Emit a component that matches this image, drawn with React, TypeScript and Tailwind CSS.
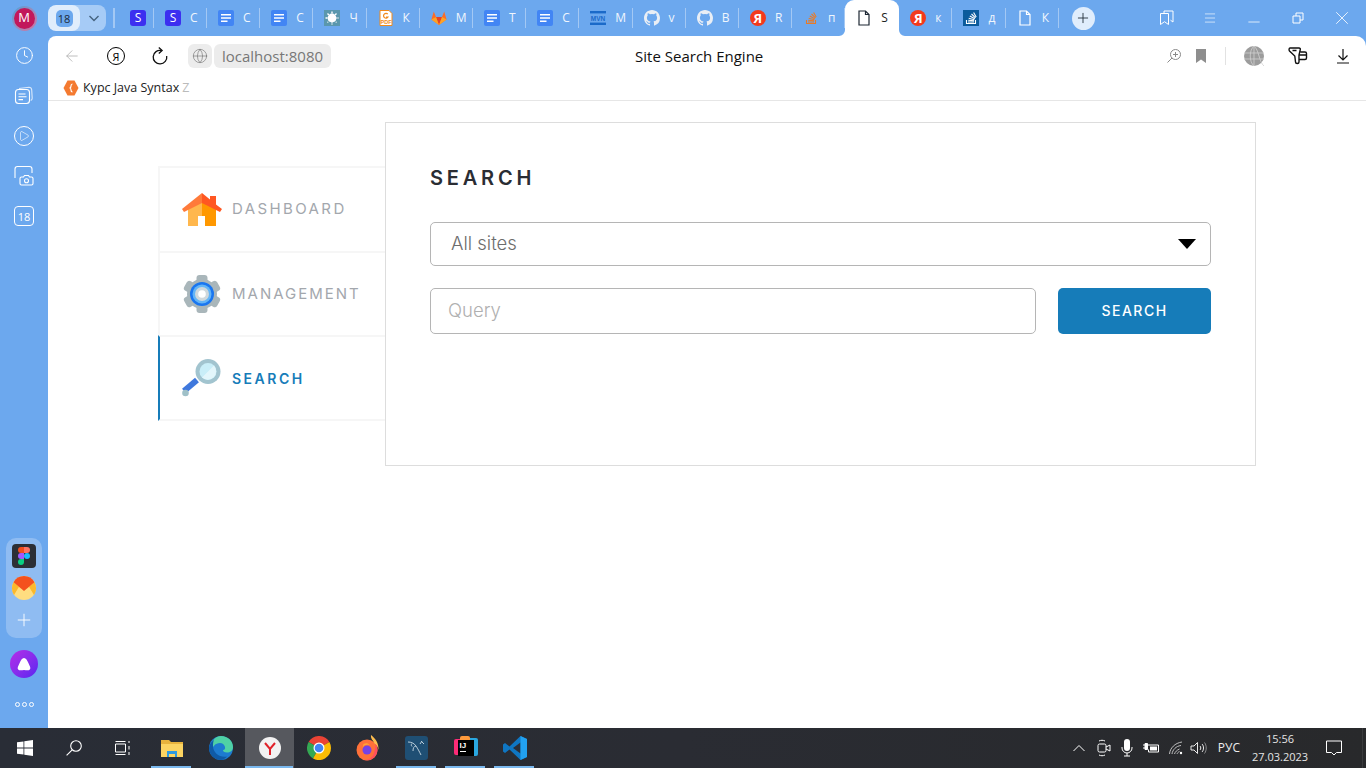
import React from 'react';
import { ArrowLeft, Globe, Download, Plus, X, Minus, Menu, Clock, Play } from 'lucide-react';

const browserFont = { fontFamily: '"Open Sans", "Noto Sans", sans-serif' };

const DocIcon = () => (
  <svg width="16" height="16" viewBox="0 0 16 16">
    <rect width="16" height="16" rx="2" fill="#4285f4" />
    <path d="M3 4h10v1.6H3zM3 7.2h10v1.6H3zM3 10.4h6.5V12H3z" fill="#fff" />
  </svg>
);
const SIcon = () => (
  <div className="flex h-4 w-4 items-center justify-center rounded-[3px] bg-[#3c2ff0] text-[12px] leading-none text-white">S</div>
);
const SplatIcon = () => (
  <svg width="16" height="16" viewBox="0 0 16 16">
    <rect width="16" height="16" fill="#5a97ad" />
    <circle cx="8" cy="8" r="4.4" fill="#fff" />
    <path d="M8 1.5v13M1.5 8h13M3.5 3.5l9 9M12.5 3.5l-9 9" stroke="#fff" strokeWidth="1.4" strokeDasharray="2 1" />
  </svg>
);
const PdfIcon = () => (
  <svg width="16" height="16" viewBox="0 0 16 16">
    <path d="M2 .5h9l3 3v12H2z" fill="#fff" stroke="#f08a1d" />
    <path d="M9.800 4.200A2.400 2.400 0 1 0 10 7H8" fill="none" stroke="#f08a1d" strokeWidth="1.200" />
    <text x="8" y="14" textAnchor="middle" fontSize="5.500" fontWeight="700" fill="#f08a1d" fontFamily="Liberation Sans, sans-serif">PDF</text>
  </svg>
);
const GitlabIcon = () => (
  <svg width="16" height="16" viewBox="0 0 16 16">
    <path d="M8 15L.4 9.4 2.8 1.5 5 7h6l2.2-5.5 2.4 7.9z" fill="#fc6d26" />
    <path d="M8 15L5 7h6z" fill="#e24329" />
    <path d="M8 15L.4 9.4 5 7zM8 15l7.6-5.6L11 7z" fill="#fca326" />
  </svg>
);
const MvnIcon = () => (
  <svg width="16" height="16" viewBox="0 0 16 16">
    <rect y="1" width="16" height="2.4" fill="#1b6ac9" />
    <rect y="12.6" width="16" height="2.4" fill="#1b6ac9" />
    <text x="8" y="10.6" textAnchor="middle" fontSize="6.5" fontWeight="700" fill="#1b6ac9" fontFamily="Liberation Sans, sans-serif">MVN</text>
  </svg>
);
const GithubIcon = () => (
  <svg width="16" height="16" viewBox="0 0 16 16">
    <path
      fill="#e9eef5"
      d="M8 0C3.58 0 0 3.58 0 8c0 3.54 2.29 6.53 5.47 7.59.4.07.55-.17.55-.38v-1.34c-2.23.48-2.7-1.07-2.7-1.07-.36-.93-.89-1.17-.89-1.17-.73-.5.05-.49.05-.49.8.06 1.23.83 1.23.83.71 1.23 1.87.87 2.33.66.07-.52.28-.87.5-1.07-1.78-.2-3.64-.89-3.64-3.95 0-.87.31-1.59.82-2.15-.08-.2-.36-1.02.08-2.12 0 0 .67-.21 2.2.82a7.6 7.6 0 0 1 4 0c1.53-1.04 2.2-.82 2.2-.82.44 1.1.16 1.92.08 2.12.51.56.82 1.27.82 2.15 0 3.07-1.87 3.75-3.65 3.95.29.25.54.73.54 1.48v2.2c0 .21.15.46.55.38A8 8 0 0 0 16 8c0-4.42-3.58-8-8-8z"
    />
  </svg>
);
const YaIcon = () => (
  <div className="flex h-4 w-4 items-center justify-center rounded-full bg-[#f33a1c] text-[13px] font-bold leading-none text-white">Я</div>
);
const StackIcon = ({ color, bg }: { color: string; bg?: string }) => (
  <svg width="16" height="16" viewBox="0 0 16 16">
    {bg && <rect width="16" height="16" fill={bg} />}
    <path d="M3.5 10v3.5h9V10" fill="none" stroke={color} strokeWidth="1.1" />
    <path d="M5 12h6M5.2 10.2l5.8.5M5.7 8.2l5.6 1.5M6.8 6l5 2.7M8.5 4l4 3.8M10.6 2.4l2.6 4.6" stroke={color} strokeWidth="1.1" />
  </svg>
);
const PageIcon = ({ color }: { color: string }) => (
  <svg width="16" height="16" viewBox="0 0 16 16" fill="none" stroke={color} strokeWidth="1.2">
    <path d="M3 1h6.5L13 4.5V15H3zM9.5 1v3.5H13" />
  </svg>
);

const tabs = [
  { icon: <DocIcon />, label: 'C' },
  { icon: <DocIcon />, label: 'C' },
  { icon: <SplatIcon />, label: 'Ч' },
  { icon: <PdfIcon />, label: 'К' },
  { icon: <GitlabIcon />, label: 'M' },
  { icon: <DocIcon />, label: 'T' },
  { icon: <DocIcon />, label: 'C' },
  { icon: <MvnIcon />, label: 'M' },
  { icon: <GithubIcon />, label: 'v' },
  { icon: <GithubIcon />, label: 'B' },
  { icon: <YaIcon />, label: 'R' },
  { icon: <StackIcon color="#e87b28" />, label: 'п' },
];

const afterTabs = [
  { icon: <YaIcon />, label: 'к' },
  { icon: <StackIcon color="#fff" bg="#0b5b9c" />, label: 'д' },
  { icon: <PageIcon color="#fff" />, label: 'К' },
];

const Tab = ({ icon, label }: { icon: React.ReactNode; label: string }) => (
  <div className="flex h-[36px] w-[53.2px] shrink-0 items-center pl-[11px]">
    <div className="shrink-0">{icon}</div>
    <span className="ml-[9px] text-[12px] leading-none text-white opacity-90">{label}</span>
    <div className="ml-auto h-[20px] w-px bg-[#a3c8f4]" />
  </div>
);

const TabStrip = () => (
  <div className="flex h-[36px] shrink-0 items-center bg-[#6ca8ee]" style={browserFont}>
    <div className="flex w-[48px] shrink-0 justify-center">
      <div className="flex h-[25px] w-[25px] items-center justify-center rounded-full bg-gradient-to-br from-[#3aa0d8] to-[#d070a0] p-[2px]">
        <div className="flex h-full w-full items-center justify-center rounded-full bg-[#c2185b] text-[13px] text-white">M</div>
      </div>
    </div>
    <div className="flex h-[26px] w-[58px] shrink-0 overflow-hidden rounded-[8px] bg-[#a6cbf6]">
      <div className="flex w-[32px] items-center justify-center rounded-[8px] bg-[#e0edfc]">
        <div className="flex h-[17px] w-[17px] items-center justify-center rounded-[5px] bg-[#6ca8ee] text-[11px] leading-none text-[#1c2a3a]">18</div>
      </div>
      <svg className="ml-[8px] mt-[10px]" width="12" height="7" viewBox="0 0 12 7" fill="none" stroke="#46637f" strokeWidth="1.4">
        <path d="M1.5 1l4.5 4.5L10.5 1" />
      </svg>
    </div>
    <div className="ml-[7px] h-[20px] w-[2px] bg-[#a3c8f4]" />
    <div className="flex h-[36px] w-[39px] shrink-0 items-center pl-[15px]">
      <SIcon />
      <div className="ml-auto h-[20px] w-px bg-[#a3c8f4]" />
    </div>
    <div className="flex h-[36px] w-[53px] shrink-0 items-center pl-[11px]">
      <SIcon />
      <span className="ml-[9px] text-[12px] leading-none text-white opacity-90">C</span>
      <div className="ml-auto h-[20px] w-px bg-[#a3c8f4]" />
    </div>
    {tabs.map((t, i) => (
      <Tab key={i} icon={t.icon} label={t.label} />
    ))}
    {/* active tab */}
    <div className="relative flex h-[36px] w-[54px] shrink-0 items-center rounded-t-[9px] bg-white pl-[11px]">
      <PageIcon color="#1d2733" />
      <span className="ml-[9px] text-[12px] leading-none text-[#222]">S</span>
      <svg className="absolute bottom-0 left-[-6px]" width="6" height="6" viewBox="0 0 6 6"><path d="M6 0v6H0a6 6 0 0 0 6-6z" fill="#fff" /></svg>
      <svg className="absolute bottom-0 right-[-6px]" width="6" height="6" viewBox="0 0 6 6"><path d="M0 0v6h6a6 6 0 0 1-6-6z" fill="#fff" /></svg>
    </div>
    {afterTabs.map((t, i) => (
      <Tab key={i} icon={t.icon} label={t.label} />
    ))}
    <div className="ml-[13px] flex h-[23px] w-[23px] shrink-0 items-center justify-center rounded-full bg-[#e0edfc]">
      <Plus size={16} strokeWidth={1.3} color="#1d2733" />
    </div>
    <div className="ml-[62px] flex items-center text-white">
      <svg width="20" height="20" viewBox="0 0 20 20" fill="none" stroke="#fff" strokeWidth="1">
        <path d="M3.5 5.5h8v11l-4-2.8-4 2.8zM7 5.5V3h9v11l-2.5-1.800" />
      </svg>
      <Menu className="ml-[26px]" size={14} strokeWidth={1.1} />
      <Minus className="ml-[28px] mt-[8px]" size={18} strokeWidth={1} />
      <svg className="ml-[28px]" width="14" height="14" viewBox="0 0 14 14" fill="none" stroke="#fff" strokeWidth="1">
        <path d="M2 5h7v7H2zM5 5V2h7v7H9" />
      </svg>
      <X className="ml-[26px]" size={22} strokeWidth={0.9} />
    </div>
  </div>
);

const SideRail = () => (
  <div className="flex w-[48px] shrink-0 flex-col items-center bg-[#6ca8ee] text-white">
    <Clock className="mt-[10px]" size={19} strokeWidth={1.2} />
    <svg className="mt-[21px]" width="20" height="20" viewBox="0 0 20 20" fill="none" stroke="#fff" strokeWidth="1.1">
      <rect x="1.5" y="3.5" width="14" height="14" rx="3" />
      <path d="M4.5 8h7M4.5 10.8h8M4.5 13.6h4.5" />
      <path d="M5 2.5l10-1.2c1.5 0 2.5 1 2.7 2.5l.5 8.5c0 1-.5 1.8-1.5 2.2" opacity=".75" />
    </svg>
    <div className="relative mt-[20px] flex h-[20px] w-[20px] items-center justify-center rounded-full border border-white">
      <Play size={12} strokeWidth={1.2} />
    </div>
    <svg className="mt-[19px]" width="22" height="22" viewBox="0 0 22 22" fill="none" stroke="#fff" strokeWidth="1.1">
      <path d="M2 13V4c0-1.500 1-2.500 2.500-2.500h12c1.500 0 2.500 1 2.500 2.500v4" />
      <path d="M8.500 12h2l1-1.500h4l1 1.500h2c1 0 1.500.5 1.500 1.500v5c0 1-.5 1.500-1.500 1.500h-10c-1 0-1.500-.5-1.500-1.500v-5c0-1 .5-1.500 1.500-1.500z" />
      <circle cx="13.500" cy="15.700" r="2" />
    </svg>
    <div className="mt-[19px] flex h-[20px] w-[20px] items-center justify-center rounded-[4px] border border-white text-[11px] leading-none" style={browserFont}>18</div>

    <div className="mt-auto flex h-[100px] w-[36px] flex-col items-center rounded-[10px] bg-[#8fbcf2] pt-[6px]">
      <div className="flex h-[24px] w-[24px] items-center justify-center rounded-[4px] bg-[#2c2f36]">
        <svg width="12" height="18" viewBox="0 0 12 18">
          <path d="M6 0H3a3 3 0 0 0 0 6h3z" fill="#f24e1e" />
          <path d="M6 0h3a3 3 0 0 1 0 6H6z" fill="#ff7262" />
          <path d="M6 6H3a3 3 0 0 0 0 6h3z" fill="#a259ff" />
          <circle cx="9" cy="9" r="3" fill="#1abcfe" />
          <path d="M3 12h3v3a3 3 0 1 1-3-3z" fill="#0acf83" />
        </svg>
      </div>
      <svg className="mt-[8px]" width="24" height="24" viewBox="0 0 24 24">
        <circle cx="12" cy="12" r="12" fill="#ffdd80" />
        <path d="M0 12a12 12 0 0 1 1.500-5.800L7 10.800 2 19A12 12 0 0 1 0 12zM24 12a12 12 0 0 0-1.500-5.800L17 10.800 22 19a12 12 0 0 0 2-7z" fill="#fbb82c" />
        <path d="M12 0a12 12 0 0 1 10.500 6.200L12 15 1.500 6.200A12 12 0 0 1 12 0z" fill="#f4511e" />
      </svg>
      <Plus className="mt-[10px]" size={20} strokeWidth={1.1} />
    </div>
    <div className="mt-[12px] flex h-[28px] w-[28px] items-center justify-center rounded-full bg-gradient-to-br from-[#b628e8] to-[#5a22f0]">
      <svg width="14" height="13" viewBox="0 0 14 13"><path d="M7 0c2 0 3.200 2.500 4.500 5.200C13 8.500 14 10 12.800 11.500 11.500 13 9 12 7 12s-4.500 1-5.800-.5C0 10 1 8.500 2.500 5.200 3.800 2.500 5 0 7 0z" fill="#fff" /></svg>
    </div>
    <div className="mb-[21px] mt-[24px] flex gap-[2px]">
      <div className="h-[5px] w-[5px] rounded-full border border-white" />
      <div className="h-[5px] w-[5px] rounded-full border border-white" />
      <div className="h-[5px] w-[5px] rounded-full border border-white" />
    </div>
  </div>
);

const Toolbar = () => (
  <div className="flex h-[40px] shrink-0 items-center" style={browserFont}>
    <ArrowLeft className="ml-[15px] text-[#aaa]" size={18} strokeWidth={1} />
    <div className="ml-[26px] flex h-[18px] w-[18px] items-center justify-center rounded-full border-[1.500px] border-black text-[11px] leading-none">Я</div>
    <svg className="ml-[26px]" width="18" height="18" viewBox="0 0 18 18" fill="none" stroke="#111" strokeWidth="1.300">
      <path d="M10.500 3.500A6.800 6.800 0 1 0 15.700 9" />
      <path d="M7.800.6l3.300 2.900-3.300 2.900" />
    </svg>
    <div className="ml-[19px] flex h-[24px] w-[24px] items-center justify-center rounded-[6px] bg-[#ececec]">
      <Globe size={16} strokeWidth={1} color="#777" />
    </div>
    <div className="ml-[2px] flex h-[24px] items-center rounded-[6px] bg-[#ececec] px-[8px] text-[15px] text-[#777]">localhost:8080</div>
    <div className="ml-[304px] text-[15px] text-[#111]">Site Search Engine</div>
    <div className="ml-auto flex items-center">
      <svg width="16" height="16" viewBox="0 0 16 16" fill="none" stroke="#8a8a8a" strokeWidth="1">
        <circle cx="9.500" cy="6.500" r="5" />
        <path d="M6 10L1.500 14.500M9.500 4v5M7 6.500h5" />
      </svg>
      <svg className="ml-[14px]" width="10" height="14" viewBox="0 0 10 14"><path d="M0 0h10v14l-5-3.500L0 14z" fill="#8e8e8e" /></svg>
      <div className="ml-[19px] h-[18px] w-px bg-[#e2e2e2]" />
      <svg className="ml-[18px]" width="20" height="20" viewBox="0 0 20 20" fill="none">
        <circle cx="10" cy="10" r="10" fill="#9c9c9c" />
        <path d="M0 7h20M0 13h20M10 0v20M10 0C5 4 5 16 10 20M10 0c5 4 5 16 10 20" stroke="#d0d0d0" strokeWidth=".8" />
      </svg>
      <svg className="ml-[24px]" width="20" height="18" viewBox="0 0 20 18" fill="none" stroke="#111" strokeWidth="1.400">
        <path d="M2 1h9c1 0 1.500.8 1.300 1.500L11 8v7c0 2-3.500 2-3.500 0L6.800 9 1.500 4C.7 3 1 1 2 1zM12.500 5H17c1 0 1.500.5 1.500 1.500V11c0 1-.5 1.500-1.500 1.500h-6M11.500 8h7M4.500 3.500h4" />
      </svg>
      <svg className="ml-[28px] mr-[16px]" width="14" height="15" viewBox="0 0 14 15" fill="none" stroke="#111" strokeWidth="1.200">
        <path d="M7 0v11M2.500 6.500L7 11l4.500-4.500M1 14h12" />
      </svg>
    </div>
  </div>
);

const Bookmarks = () => (
  <div className="flex h-[25px] shrink-0 items-center border-b border-[#e6e6e6] pl-[15px]" style={browserFont}>
    <svg width="16" height="16" viewBox="0 0 16 16">
      <path d="M4.500 .5h7L15.500 8l-4 7.500h-7L.5 8z" fill="#f47a30" />
      <path d="M9.500 4c-1.500 0-1.500 1-1.500 2S7.500 8 6.500 8c1 0 1.500 1 1.500 2s0 2 1.500 2" fill="none" stroke="#fff" strokeWidth="1.200" />
    </svg>
    <span className="ml-[4px] text-[12.500px] text-[#222]">Курс Java Syntax</span>
    <span className="ml-[3px] text-[12.500px] text-[#bbb]">Z</span>
  </div>
);

const HomeIcon = () => (
  <svg width="40" height="33" viewBox="0 0 40 33">
    <path d="M6 16L20 6v27h-4V23h0V33H6z" fill="#ffb74d" />
    <path d="M34 16L20 6v17h3v10h11z" fill="#ff9800" />
    <path d="M16 23h7v10h-7z" fill="#fff" />
    <path d="M20 0L0 16l2 3 18-9z" fill="#ff7a3a" />
    <path d="M20 0l8 6.500V3h6v8.500l6 4.500-2 3-18-9z" fill="#ff5722" />
  </svg>
);
const GearIcon = () => (
  <svg width="40" height="38" viewBox="0 0 40 38">
    <g fill="#a9b6ba">
      <circle cx="20" cy="19" r="15" />
      <rect x="14.500" y="0" width="11" height="38" rx="3" />
      <rect x="14.500" y="0" width="11" height="38" rx="3" transform="rotate(60 20 19)" />
      <rect x="14.500" y="0" width="11" height="38" rx="3" transform="rotate(120 20 19)" />
    </g>
    <circle cx="20" cy="19" r="12" fill="#1976f0" />
    <circle cx="20" cy="19" r="9.500" fill="#64b5f6" />
    <circle cx="20" cy="19" r="7" fill="#cfd8dc" />
    <circle cx="20" cy="19" r="3.800" fill="#fff" />
  </svg>
);
const MagnifierIcon = () => (
  <svg width="40" height="38" viewBox="0 0 40 38">
    <path d="M15 21L2 32" stroke="#3f78dd" strokeWidth="6" />
    <circle cx="3.500" cy="34" r="3.300" fill="#9fc0c8" />
    <circle cx="26" cy="12.500" r="12.500" fill="#a2c4cf" />
    <circle cx="26" cy="12.500" r="8.500" fill="#c9eef8" />
    <path d="M20 18.500L32 6.500a8.500 8.500 0 0 1-12 12z" fill="#e3f6fb" />
  </svg>
);

const Sidebar = () => (
  <div className="mt-[44px] w-[227px] shrink-0">
    <div className="flex h-[85px] items-center border-2 border-b-0 border-r-0 border-[#f6f6f6] pl-[22px]">
      <HomeIcon />
      <span className="ml-[10px] text-[15px] tracking-[2.400px] text-[#a3a7ad]">DASHBOARD</span>
    </div>
    <div className="flex h-[84px] items-center border-2 border-b-0 border-r-0 border-[#f6f6f6] pl-[22px]">
      <GearIcon />
      <span className="ml-[10px] text-[15px] tracking-[2px] text-[#a3a7ad]">MANAGEMENT</span>
    </div>
    <div className="flex h-[86px] items-center border-b-2 border-l-2 border-t-2 border-b-[#f6f6f6] border-l-[#167cb9] border-t-[#f6f6f6] pl-[22px]">
      <MagnifierIcon />
      <span className="ml-[10px] text-[14px] font-semibold tracking-[2.500px] text-[#167cb9]">SEARCH</span>
    </div>
  </div>
);

const SearchPanel = () => (
  <div className="h-[344px] w-[871px] shrink-0 border border-[#dddddd] px-[44px] pt-[42px]">
    <h1 className="text-[20px] font-semibold leading-[26px] tracking-[3.800px] text-[#2a2d33]">SEARCH</h1>
    <div className="mt-[31px] flex h-[44px] items-center justify-between rounded-[5px] border border-[#b5b5b5] pl-[20px] pr-[14px]">
      <span className="text-[18.500px] font-light text-[#6d6d6d]">All sites</span>
      <svg width="18" height="10" viewBox="0 0 18 10"><path d="M0 0h18L9 10z" fill="#000" /></svg>
    </div>
    <div className="mt-[22px] flex gap-[22px]">
      <div className="flex h-[46px] w-[606px] items-center rounded-[5px] border border-[#b5b5b5] pl-[17px] text-[18.500px] font-light text-[#b0b0b0]">Query</div>
      <div className="flex h-[46px] w-[153px] items-center justify-center rounded-[5px] bg-[#167cb9] pb-[2px] text-[14px] font-medium tracking-[1.500px] text-white">SEARCH</div>
    </div>
  </div>
);

const TaskIcon = ({ children, bar, active }: { children: React.ReactNode; bar?: boolean; active?: boolean }) => (
  <div className={`relative flex h-[40px] w-[49px] shrink-0 items-center justify-center ${active ? 'bg-[#56585e]' : ''}`}>
    {children}
    {bar && <div className={`absolute bottom-0 h-[2px] bg-[#7ab8ee] ${active ? 'left-0 w-[48px]' : 'left-[4px] w-[40px]'}`} />}
  </div>
);

const Taskbar = () => (
  <div className="flex h-[40px] shrink-0 items-center bg-gradient-to-r from-[#292d36] via-[#2a2c33] to-[#28292b]" style={browserFont}>
    <TaskIcon>
      <svg width="16" height="16" viewBox="0 0 16 16" fill="#fff"><path d="M0 2.300l6.500-.9v6.200H0zM7.300 1.300L16 0v7.600H7.300zM0 8.400h6.500v6.200L0 13.700zM7.300 8.400H16V16l-8.700-1.300z" /></svg>
    </TaskIcon>
    <TaskIcon>
      <svg width="16" height="16" viewBox="0 0 16 16" fill="none" stroke="#fff" strokeWidth="1.100">
        <circle cx="10" cy="6" r="5.300" />
        <path d="M6.200 9.800L.6 15.400" />
      </svg>
    </TaskIcon>
    <TaskIcon>
      <svg width="16" height="16" viewBox="0 0 16 16" fill="none" stroke="#fff" strokeWidth="1"><path d="M.5 4h10v8H.5zM.5 1.500h10M.5 14.500h10M14 1v2M14 6v3.500M14 12v3" /></svg>
    </TaskIcon>
    <TaskIcon bar>
      <svg width="22" height="18" viewBox="0 0 22 18">
        <path d="M0 1h8l2 2h12v15H0z" fill="#e8b33d" />
        <path d="M0 5h22v13H0z" fill="#fcd462" />
        <path d="M6 18v-6h10v6h-2v-3H8v3z" fill="#2f9ae0" />
      </svg>
      <div className="absolute bottom-0 left-[35px] h-[2px] w-[9px] bg-[#4d7ea8]" />
    </TaskIcon>
    <TaskIcon>
      <svg width="24" height="24" viewBox="0 0 24 24">
        <circle cx="12" cy="12" r="12" fill="#1d7bd0" />
        <path d="M12 0c7 0 12 5 12 11 0 4-3 5.500-6 5.500-3 0-4-1-4-2.500 4 0 2-7-3-7-5 0-7 4-8 6C2 5 6 0 12 0z" fill="#4fd1a5" />
        <path d="M4 10c0 7 7 12 14 10.500C16 22.500 14 24 12 24 5 24 0 18 0 12c0-3 2-6 5-8-1 2-1 4-1 6z" fill="#0f5aa6" />
      </svg>
    </TaskIcon>
    <TaskIcon active bar>
      <div className="flex h-[22px] w-[22px] items-center justify-center rounded-full bg-[#f2f2f2]">
        <svg width="12" height="13" viewBox="0 0 12 13" fill="none" stroke="#e1222a" strokeWidth="2"><path d="M1 1l5 6 5-6M6 7v6" /></svg>
      </div>
    </TaskIcon>
    <TaskIcon>
      <svg width="24" height="24" viewBox="0 0 24 24">
        <path d="M12 12L1.600 6A12 12 0 0 1 22.400 6z" fill="#ea4335" />
        <path d="M12 12l-6 10.400A12 12 0 0 1 1.600 6z" fill="#34a853" />
        <path d="M12 12h12a12 12 0 0 1-18 10.400zM12 12L22.400 6A12 12 0 0 1 24 12z" fill="#fbbc05" />
        <circle cx="12" cy="12" r="5.500" fill="#fff" />
        <circle cx="12" cy="12" r="4.300" fill="#4285f4" />
      </svg>
    </TaskIcon>
    <TaskIcon>
      <svg width="24" height="26" viewBox="0 0 24 26">
        <circle cx="11" cy="15" r="10.500" fill="#ff7139" />
        <path d="M15 0c4 3 8 8 7.500 15-.5-3-2-5-4-6.500C17 5 14.500 4 15 0z" fill="#ffbd4f" />
        <path d="M21.500 15a10.500 10.500 0 0 1-13 10c5 0 9-3 10-9 1-3 1-5 1-7 1.500 1.500 2 3.500 2 6z" fill="#ff4f5e" />
        <circle cx="11" cy="15" r="4.500" fill="#7542e5" />
        <path d="M6.500 13c1-3 4-4 7-3-1-2-4-2-6-1z" fill="#ffa436" />
      </svg>
    </TaskIcon>
    <TaskIcon bar>
      <div className="flex h-[24px] w-[23px] items-center justify-center rounded-[3px] bg-[#1f4f74]">
        <svg width="19" height="19" viewBox="0 0 19 19" fill="none" stroke="#b9cdda" strokeWidth="1"><path d="M1 3c3 0 6 1 8 4 2 3 3 5 5 9M9 7c-2 0-3 2-3 5M5 4.500c-1 1-1 2 0 3M14 2l3 3M15 2l-2 3" /></svg>
      </div>
    </TaskIcon>
    <TaskIcon bar>
      <div className="relative h-[24px] w-[24px]">
        <div className="absolute right-0 top-[2px] h-[18px] w-[16px] rounded-[2px] bg-[#2aa7e0]" />
        <div className="absolute left-0 top-[3px] h-[16px] w-[12px] rounded-[2px] bg-[#fc2c77]" />
        <div className="absolute left-[6px] top-0 h-[8px] w-[10px] rounded-[2px] bg-[#ff9a3c]" />
        <div className="absolute left-[4px] top-[4px] h-[16px] w-[16px] bg-black p-[2px] text-[8px] font-bold leading-[8px] text-white" style={{ fontFamily: '"Liberation Sans", sans-serif' }}>
          IJ
          <div className="mt-[1px] h-[1px] w-[6px] bg-white" />
        </div>
      </div>
    </TaskIcon>
    <TaskIcon bar>
      <svg width="24" height="24" viewBox="0 0 24 24">
        <path d="M17.500 0L24 3v18l-6.500 3-11-10.500L2 17l-2-1.500v-7L2 7l4.500 3.500z" fill="#0f76c2" />
        <path d="M17.500 6.500L10 12l7.500 5.500z" fill="#2b2e36" />
        <path d="M17.500 0L24 3v18l-6.500 3z" fill="#22a1f0" />
      </svg>
    </TaskIcon>

    {/* tray */}
    <div className="ml-auto flex h-full items-center text-white">
      <svg width="12" height="8" viewBox="0 0 12 8" fill="none" stroke="#fff" strokeWidth="1"><path d="M.5 7L6 1.500 11.500 7" /></svg>
      <svg className="ml-[12px]" width="14" height="18" viewBox="0 0 14 18" fill="none" stroke="#fff" strokeWidth="1">
        <rect x="1" y="5" width="8" height="8" rx="1.500" />
        <path d="M9 8l4-2v6l-4-2M2 2c2-1 4-1 6 0M2 16c2 1 4 1 6 0" />
      </svg>
      <svg className="ml-[10px]" width="12" height="18" viewBox="0 0 12 18" fill="#fff">
        <rect x="3" y="0" width="6" height="12" rx="3" />
        <path d="M1 8v1a5 5 0 0 0 10 0V8M6 14v3M3 17h6" fill="none" stroke="#fff" />
      </svg>
      <svg className="ml-[10px]" width="16" height="12" viewBox="0 0 16 12" fill="none" stroke="#fff">
        <path d="M0 3h2M0 6h2" />
        <path d="M2 1.500h2.500v6H2z" fill="#fff" />
        <path d="M4.500 4.500V3h11v7h-10V7.500" />
        <rect x="7" y="4.500" width="7" height="4" fill="#fff" stroke="none" />
      </svg>
      <svg className="ml-[10px]" width="14" height="14" viewBox="0 0 14 14" fill="none" stroke="#cfcfcf" strokeWidth=".9">
        <path d="M.5 13C1 7 6 2 13 1M3 13c.5-4 4-8 9-8.500M5.500 13c.5-2 2.500-4 5-5M8 13c.5-1 1-2 2.500-2.500" />
        <circle cx="12" cy="12" r="1.200" fill="#fff" stroke="none" />
      </svg>
      <svg className="ml-[7px]" width="17" height="14" viewBox="0 0 17 14" fill="none" stroke="#fff" strokeWidth=".9">
        <path d="M1 5h3l3.500-3.500v11L4 9H1z" />
        <path d="M10 5c1 1 1 3 0 4M12 3c2 2 2 6 0 8" />
        <path d="M14.500 1.500c2.300 3 2.300 8 0 11" opacity=".5" />
      </svg>
      <span className="ml-[11px] text-[12px] text-[#eee]">РУС</span>
      <div className="ml-[12px] flex w-[56px] flex-col items-center text-[11px] leading-[18px] text-[#e5e5e5]">
        <span>15:56</span>
        <span>27.03.2023</span>
      </div>
      <svg className="ml-[18px]" width="16" height="16" viewBox="0 0 16 16" fill="none" stroke="#fff" strokeWidth="1"><path d="M.5 1h15v11.500h-5L8 15l-2.500-2.500h-5z" /></svg>
      <div className="ml-[20px] h-full w-px bg-[#3a3b3d]" />
      <div className="w-[3px]" />
    </div>
  </div>
);

export default function App() {
  return (
    <div className="flex h-screen w-full flex-col overflow-hidden bg-[#6ca8ee]" style={{ fontFamily: 'Inter, "Noto Sans", sans-serif' }}>
      <TabStrip />
      <div className="flex min-h-0 flex-1">
        <SideRail />
        <div className="flex min-w-0 flex-1 flex-col rounded-tl-[8px] rounded-tr-[10px] bg-white">
          <Toolbar />
          <Bookmarks />
          <div className="flex flex-1 pl-[110px] pt-[21px]">
            <Sidebar />
            <SearchPanel />
          </div>
        </div>
      </div>
      <Taskbar />
    </div>
  );
}
